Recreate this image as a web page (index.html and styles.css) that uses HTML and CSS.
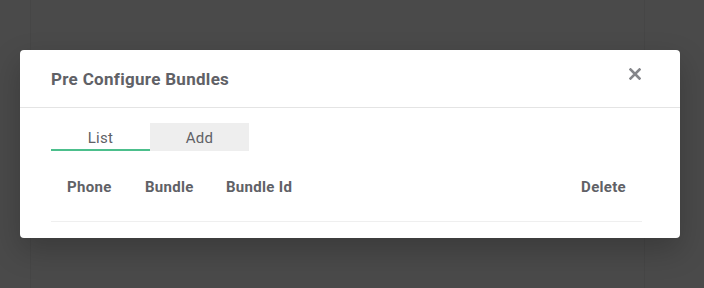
FILE: index.html
```html
<!DOCTYPE html>
<html lang="en">
<head>
  <meta charset="UTF-8" />
  <meta name="viewport" content="width=device-width, initial-scale=1.0"/>
  <title>Pre Configure Bundles</title>
  <link rel="stylesheet" href="styles.css">
</head>
<body>
  <div class="backdrop">
    <div class="modal">
      <div class="modal-header">
        <h2>Pre Configure Bundles</h2>
        <button class="close-btn" aria-label="Close">
          <svg width="12" height="12" viewBox="0 0 12 12">
            <path d="M1.5 1.5 L10.5 10.5 M10.5 1.5 L1.5 10.5" stroke="#85868a" stroke-width="2.6" stroke-linecap="square"/>
          </svg>
        </button>
      </div>

      <div class="modal-body">
        <div class="tabs">
          <button class="tab active">List</button>
          <button class="tab">Add</button>
        </div>

        <table class="bundles">
          <thead>
            <tr>
              <th class="col-phone">Phone</th>
              <th class="col-bundle">Bundle</th>
              <th class="col-id">Bundle Id</th>
              <th class="col-delete">Delete</th>
            </tr>
          </thead>
          <tbody></tbody>
        </table>
      </div>
    </div>
  </div>
</body>
</html>
```

FILE: styles.css
```css
* {
  box-sizing: border-box;
  margin: 0;
  padding: 0;
  font-family: Roboto, 'Liberation Sans', Arial, sans-serif;
}

body {
  background-color: #4a4a4a;
  color: #606166;
  height: 100vh;
  overflow: hidden;
}

.backdrop {
  padding: 50px 24px 0 20px;
  background: linear-gradient(to right, #4a4a4a 30px, #464646 30px, #464646 31px, #4a4a4a 31px, #4a4a4a 644px, #464646 644px, #464646 645px, #4a4a4a 645px);
  height: 100%;
}

.modal {
  background-color: #fff;
  width: 660px;
  height: 188px;
  border-radius: 4px;
  box-shadow: 0 12px 30px rgba(0, 0, 0, 0.22);
}

.modal-header {
  height: 58px;
  display: flex;
  align-items: center;
  justify-content: space-between;
  padding: 0 39px 0 31px;
  border-bottom: 1px solid #e4e4e4;
}

.modal-header h2 {
  font-size: 17px;
  font-weight: 700;
  letter-spacing: 0.3px;
  color: #606166;
  margin-top: 1px;
}

.close-btn {
  background: none;
  border: none;
  width: 12px;
  height: 12px;
  margin-top: -9px;
  cursor: pointer;
  display: flex;
}

.modal-body {
  padding: 15px 38px 16px 31px;
}

.tabs {
  display: flex;
}

.tab {
  width: 99px;
  height: 28px;
  border: none;
  background-color: #eeeeee;
  color: #606166;
  font-size: 15px;
  letter-spacing: 0.3px;
  cursor: pointer;
  border-bottom: 2px solid transparent;
  padding-top: 3px;
}

.tab.active {
  background-color: #fff;
  border-bottom-color: #4cbf8c;
}

.bundles {
  width: 100%;
  border-collapse: collapse;
}

.bundles th {
  font-size: 15px;
  font-weight: 700;
  letter-spacing: 0.3px;
  text-align: left;
  color: #606166;
  height: 70px;
  padding: 2px 16px 0;
  border-bottom: 1px solid #efefef;
}

.col-phone { width: 78px; }
.col-bundle { width: 81px; }
.bundles th.col-delete { text-align: right; }
```
